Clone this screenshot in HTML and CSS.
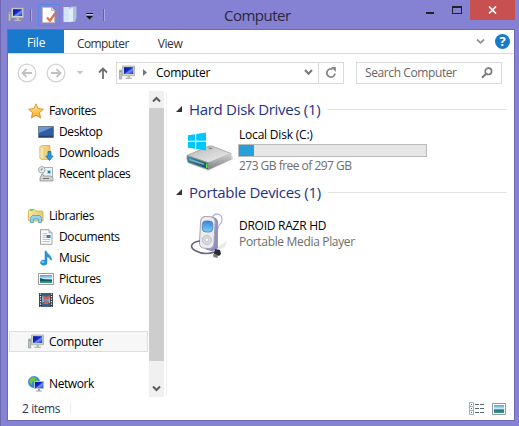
FILE: index.html
```html
<!DOCTYPE html>
<html lang="en">
<head>
<meta charset="utf-8">
<title>Computer</title>
<link rel="stylesheet" href="styles.css">
</head>
<body>
<svg class="defs" aria-hidden="true">
  <defs>
    <linearGradient id="screen" x1="0" y1="0" x2="1" y2="1"><stop offset="0" stop-color="#0a12a8"/><stop offset=".45" stop-color="#1226cc"/><stop offset=".6" stop-color="#6f96f4"/><stop offset="1" stop-color="#1730c0"/></linearGradient>
    <linearGradient id="folder" x1="0" y1="0" x2="1" y2="0"><stop offset="0" stop-color="#f8e7a2"/><stop offset="1" stop-color="#e8c768"/></linearGradient>
    <linearGradient id="metal" x1="0" y1="0" x2="0" y2="1"><stop offset="0" stop-color="#d4d5d5"/><stop offset="1" stop-color="#7c7e80"/></linearGradient>
    <linearGradient id="lid" x1="0" y1="0" x2="1" y2="1"><stop offset="0" stop-color="#b5b6b7"/><stop offset="1" stop-color="#f1f1f1"/></linearGradient>
    <linearGradient id="blueface" x1="0" y1="0" x2="1" y2="1"><stop offset="0" stop-color="#4a93ad"/><stop offset="1" stop-color="#1d4252"/></linearGradient>
    <linearGradient id="sky" x1="0" y1="0" x2="0" y2="1"><stop offset="0" stop-color="#4c9fe0"/><stop offset=".5" stop-color="#d7f0fa"/><stop offset=".6" stop-color="#27706a"/><stop offset="1" stop-color="#3aa08a"/></linearGradient>
    <linearGradient id="star" x1="0" y1="0" x2="0" y2="1"><stop offset="0" stop-color="#fff3a0"/><stop offset="1" stop-color="#ffa71c"/></linearGradient>
    <linearGradient id="lcd" x1="0" y1="0" x2="0" y2="1"><stop offset="0" stop-color="#2e86dc"/><stop offset="1" stop-color="#7fd0fa"/></linearGradient>
    <symbol id="pc" viewBox="0 0 16 16">
      <path d="M.5 5h2.200v9H.5z" fill="#bfc4c2" stroke="#8b908e" stroke-width=".6"/><path d="M1 6.500h1.300" stroke="#41c13c"/>
      <path d="M3.500 1h12v9.800h-12z" fill="#d5d5d0" stroke="#a3a39e" stroke-width=".7"/><path d="M5 2.200h9.200v6.800H5z" fill="url(#screen)"/>
      <path d="M8.500 11h2.500v1.700h2v1.300H6.300v-1.300h2.200z" fill="#b8b8b4"/>
    </symbol>
  </defs>
</svg>
<div class="window">
  <header class="titlebar">
    <div class="quick">
      <svg class="i16" width="16" height="16"><use href="#pc"/></svg>
      <span class="bar bar-a"></span>
      <span class="quick-props"><svg width="16" height="18" viewBox="0 0 16 18"><path d="M1.500 1.500h9l3 3v12h-12z" fill="#fff" stroke="#bdbdc6"/><path d="M10.500 1.500v3h3" fill="#ddd" stroke="#bbb"/><path d="M6 11.500l3 3.200 5-7.200" fill="none" stroke="#e07043" stroke-width="2.300"/></svg></span>
      <svg class="quick-folder" width="15" height="17" viewBox="0 0 15 17"><path d="M.5 1h6v15h-6z" fill="#d5e5f1"/><path d="M6 2l2-1.500h5.500v11L12 16H6z" fill="#a9c6df"/><path d="M6 3l4-1.500V15l-4 1.200z" fill="#e3eff7"/></svg>
      <svg class="quick-more" width="8" height="7" viewBox="0 0 8 7"><path d="M0 .5h7" stroke="#111"/><path d="M0 1.500h7" stroke="#c7c3ed"/><path d="M0 3h7L3.500 6.500z" fill="#111"/></svg>
      <span class="bar bar-b"></span>
    </div>
    <h1 class="title">Computer</h1>
    <div class="controls">
      <span class="minimize"></span><span class="maximize"></span>
      <span class="close"><svg width="9" height="8" viewBox="0 0 9 8"><path d="M1 .5l7 7M8 .5l-7 7" stroke="#fff" stroke-width="1.700"/></svg></span>
    </div>
  </header>
  <main class="client">
    <nav class="ribbon">
      <span class="file">File</span><span class="tab tab-computer">Computer</span><span class="tab tab-view">View</span>
      <span class="ribbon-end">
        <svg width="9" height="7" viewBox="0 0 9 7"><path d="M1 1.500l3.500 3.300L8 1.500" fill="none" stroke="#919191" stroke-width="1.800"/></svg>
        <span class="help">?</span>
      </span>
    </nav>
    <div class="address-row">
      <svg class="back" width="20" height="20" viewBox="0 0 20 20"><circle cx="10" cy="10" r="8.800" fill="none" stroke="#d3d3d3" stroke-width="1.300"/><path d="M15 10H6M9.500 6L5.500 10l4 4" fill="none" stroke="#c1c1c1" stroke-width="1.800"/></svg>
      <svg class="forward" width="20" height="20" viewBox="0 0 20 20"><circle cx="10" cy="10" r="8.800" fill="none" stroke="#d3d3d3" stroke-width="1.300"/><path d="M5 10h9M10.500 6l4 4-4 4" fill="none" stroke="#c1c1c1" stroke-width="1.800"/></svg>
      <svg class="history" width="8" height="4" viewBox="0 0 8 4"><path d="M.5 0h7L4 3.500z" fill="#c8c8c8"/></svg>
      <svg class="up" width="10" height="12" viewBox="0 0 10 12"><path d="M5 12V2M1 5.500l4-4 4 4" fill="none" stroke="#6f6f6f" stroke-width="1.800"/></svg>
      <div class="address">
        <svg class="i16" width="16" height="16"><use href="#pc"/></svg>
        <svg class="crumb" width="4" height="7" viewBox="0 0 4 7"><path d="M0 0l4 3.500L0 7z" fill="#777"/></svg>
        <span class="path">Computer</span>
        <svg class="drop" width="9" height="7" viewBox="0 0 9 7"><path d="M1 1l3.500 3.800L8 1" fill="none" stroke="#777" stroke-width="2"/></svg>
        <span class="refresh"><svg width="12" height="12" viewBox="0 0 12 12"><path d="M7.500 2.200A4.100 4.100 0 1 0 10 6.500" fill="none" stroke="#858585" stroke-width="1.700"/><path d="M6 0h4.800v5z" fill="#858585"/></svg></span>
      </div>
      <div class="search"><span>Search Computer</span><svg width="12" height="12" viewBox="0 0 12 12"><circle cx="7.400" cy="4.300" r="3.200" fill="none" stroke="#777" stroke-width="1.600"/><path d="M5 6.800L1 10.800" stroke="#777" stroke-width="2"/></svg></div>
    </div>
    <div class="body">
      <aside class="tree">
        <div class="row"><svg width="16" height="16" viewBox="0 0 16 16"><path d="M8 .8l2.100 4.900 5.300.5-4 3.500 1.200 5.200L8 12.200l-4.600 2.700 1.200-5.200-4-3.500 5.300-.5z" fill="url(#star)" stroke="#e78b29" stroke-width="1"/></svg><span>Favorites</span></div>
        <div class="row sub"><svg width="16" height="16" viewBox="0 0 16 16"><path d="M.5 2.500h15v11H.5z" fill="#305f9f" stroke="#6e7f9a"/><path d="M1 3h14L1 9z" fill="#6d99d1"/><path d="M1 12.500h14" stroke="#243f75" stroke-width="1.500"/></svg><span>Desktop</span></div>
        <div class="row sub downloads"><svg width="16" height="16" viewBox="0 0 16 16"><path d="M2 1.500l2-1h8v14H4l-2-1z" fill="url(#folder)" stroke="#d4b354" stroke-width=".8"/><path d="M6 3v11.500L2 13V1.500z" fill="#f7e7a8" stroke="#d8bd6d" stroke-width=".6"/><path d="M10 6.500h3V11h2.200l-3.700 4.500L7.800 11H10z" fill="#2e97dc" stroke="#1567ab" stroke-width=".7"/></svg><span>Downloads</span></div>
        <div class="row sub"><svg width="16" height="16" viewBox="0 0 16 16"><path d="M5 1.500h9.500v10H5z" fill="#f0f4f6" stroke="#a8b0b4"/><path d="M9 4h4v4H9z" fill="#9bd3ee"/><path d="M10 5h2v2h-2z" fill="#2a75ab"/><path d="M4 8l-2 4v3h13v-3l-2-2H6z" fill="#cfd2d3" stroke="#8e9395" stroke-width=".8"/><path d="M5 12.500h6" stroke="#777"/><circle cx="3.800" cy="3.800" r="3.200" fill="#eef2f3" stroke="#9ba4a8"/><path d="M4 2v2H2.500" fill="none" stroke="#666" stroke-width=".8"/></svg><span>Recent places</span></div>
        <div class="row gap"><svg width="16" height="16" viewBox="0 0 16 16"><path d="M.5 3l1-1.500h5L8 3h6l1 1v9H.5z" fill="url(#folder)" stroke="#cba94c" stroke-width=".8"/><path d="M2 2.200h3" stroke="#56b83c"/><path d="M2.500 14.500V9.500l2-2h7l2 2v5h-3V11h-5v3.500z" fill="#94d3ed" stroke="#4b9fc5" stroke-width=".8"/></svg><span>Libraries</span></div>
        <div class="row sub"><svg width="16" height="16" viewBox="0 0 16 16"><path d="M2.500.7H11l3 3v11.600H2.500z" fill="#fafafa" stroke="#969696" stroke-width=".9"/><path d="M11 .7v3h3" fill="#ddd" stroke="#999" stroke-width=".7"/><path d="M4.500 4.500H9M4.500 6.500H8M4.500 8.500H8M4.500 10.500h7.500M4.500 12.500h7.500" stroke="#aaa" stroke-width=".7"/><path d="M8.500 6h4v3h-4z" fill="#337fc7"/></svg><span>Documents</span></div>
        <div class="row sub"><svg width="16" height="16" viewBox="0 0 16 16"><path d="M8 1c1 3 5.500 4 5.500 9h-1C12 8 10.500 7 9 6.500V13c0 3-6.500 3-6.500-.3C2.500 10.500 5 9.600 7 10.300V1z" fill="#2797dc" stroke="#1d78bc" stroke-width=".5"/><ellipse cx="5" cy="12" rx="1.700" ry="1" fill="#72c9f3"/></svg><span>Music</span></div>
        <div class="row sub"><svg width="16" height="16" viewBox="0 0 16 16"><path d="M.5 2.500h15v11H.5z" fill="#fff" stroke="#9a9a9a"/><path d="M2 4h12v8H2z" fill="url(#sky)"/><path d="M2 7l5 1.500 7 .5v1H2z" fill="#15576a"/></svg><span>Pictures</span></div>
        <div class="row sub"><svg width="16" height="16" viewBox="0 0 16 16"><path d="M1 1h14v14H1z" fill="#3b3b3b"/><path d="M4 1h8v14H4z" fill="#8bbbd9"/><path d="M4 1h8v4l-3 2-5-3zM4 11l3-2 5 2v4H4z" fill="#365f8a"/><path d="M5 3l3 2 4-2-1 4-2 2H6zM5 12l3-4 3 1-1 3z" fill="#cb6453"/><path d="M4.500 8h7" stroke="#5ba6dd" stroke-width="1.500"/><path d="M2.500 1.500v13M13.500 1.500v13" stroke="#eee" stroke-width="1.300" stroke-dasharray="1.300 1.200"/></svg><span>Videos</span></div>
        <div class="row gap selected"><svg width="16" height="16"><use href="#pc"/></svg><span>Computer</span></div>
        <div class="row gap"><svg width="16" height="16" viewBox="0 0 16 16"><circle cx="6" cy="6" r="5.600" fill="#2a8fd8" stroke="#2b6fae" stroke-width=".6"/><path d="M2 3l3-2 3 1-1 3-3 1v3L1 6zM8 3l2 1v2H8z" fill="#69c840"/><path d="M6.500 5.500h9v7h-9z" fill="url(#screen)" stroke="#b8bcc4"/><path d="M10 13h2v1.500h2v1H8v-1h2z" fill="#8da5bb"/></svg><span>Network</span></div>
      </aside>
      <div class="scrollbar">
        <svg width="9" height="7" viewBox="0 0 9 7"><path d="M1 5.500l3.500-3.500L8 5.500" fill="none" stroke="#5c5c5c" stroke-width="2"/></svg>
        <span class="thumb"></span>
        <svg width="9" height="7" viewBox="0 0 9 7"><path d="M1 1.500L4.500 5 8 1.500" fill="none" stroke="#5c5c5c" stroke-width="2"/></svg>
      </div>
      <section class="content">
        <div class="group"><svg width="6" height="6" viewBox="0 0 6 6"><path d="M6 0v6H0z" fill="#333"/></svg><h2 class="g-disk">Hard Disk Drives (1)</h2><span class="rule"></span></div>
        <div class="item disk">
          <svg width="50" height="44" viewBox="0 0 50 44"><path d="M6 36l18 7 25-12v-3L24 38z" fill="#dedede"/><path d="M3 27.500L25 18h3l19 7.500L25 35z" fill="url(#lid)" stroke="#9c9c9c" stroke-width=".8"/><path d="M24 34.500L47.500 25v6.500L25 41.500z" fill="url(#metal)"/><path d="M3 27.500l21.500 7.500v6.500L4 34.500q-1.500-3-1-7z" fill="url(#blueface)" stroke="#8b9499" stroke-width=".8"/><path d="M5 30.500l15 5v1.500L6 32.500z" fill="#6db9c9"/><path d="M22.800 35.500v4.500" stroke="#4df03c" stroke-width="1.700"/><path d="M24 19.500l5 .5-3 1.200z" fill="#777"/><g fill="#00c8ff"><path d="M4 7.200l7-1v6.600H4zM12.200 6L22 4.500v8.300h-9.800zM4 14h7v6.800l-7-1zM12.200 14H22v8.500L12.200 21z"/></g></svg>
          <div class="details"><span class="name n-disk">Local Disk (C:)</span><span class="meter"><span class="used"></span></span><span class="note t-free">273 GB free of 297 GB</span></div>
        </div>
        <div class="group"><svg width="6" height="6" viewBox="0 0 6 6"><path d="M6 0v6H0z" fill="#333"/></svg><h2 class="g-port">Portable Devices (1)</h2><span class="rule"></span></div>
        <div class="item player">
          <svg width="50" height="50" viewBox="0 0 50 50"><path d="M26 37l11-7-2 6-9 4z" fill="#e8e8e8"/><path d="M22 8C24 .5 32 2 32 9c0 5-5 4-4 9" fill="none" stroke="#b9b5dc" stroke-width="1.300"/><path d="M20 6l5 1q2.500 1 2.500 4v26l-5 3-7-2z" fill="#918dc8" stroke="#7774b0" stroke-width=".6"/><g transform="rotate(3 17 22)"><rect x="10" y="5.500" width="14.500" height="32" rx="5" fill="#ececf1" stroke="#a6a6b5"/><rect x="12" y="10" width="10.500" height="11" rx="3.500" fill="url(#lcd)" stroke="#5c7897" stroke-width=".8"/><circle cx="17.200" cy="29" r="4.600" fill="#dcdce4" stroke="#b3b3c0" stroke-width=".8"/><circle cx="17.200" cy="29" r="2" fill="#fff" stroke="#aaa" stroke-width=".6"/></g><path d="M10 30C1 31-1 36 5 39.500s12 4 20 1.500" fill="none" stroke="#686587" stroke-width="1.600"/><path d="M25 38l5 1 1 4-2 2-5-2z" fill="#292932"/><path d="M23 43l5 1-.5 3-4-1z" fill="#777"/></svg>
          <div class="details"><span class="name n-droid">DROID RAZR HD</span><span class="note t-player">Portable Media Player</span></div>
        </div>
      </section>
    </div>
    <footer class="status"><span class="count">2 items</span><span class="status-rule"></span>
      <span class="views"><svg width="16" height="14" viewBox="0 0 16 14"><path d="M.5.500h4v4h-4zM.5 4.500h4v4h-4zM.5 8.500h4v4h-4z" fill="#fff" stroke="#a3adb5"/><path d="M2 2h1v1H2z" fill="#3c8a4a"/><path d="M2 6h1v1H2z" fill="#c33"/><path d="M2 10h1v1H2z" fill="#2266bb"/><path d="M6 2.500h4M11 2.500h4M6 6.500h4M11 6.500h4M6 10.500h4M11 10.500h4" stroke="#596675"/></svg><svg width="14" height="12" viewBox="0 0 14 12"><path d="M.5.500h13v11H.5z" fill="#fff" stroke="#8e9ba7"/><path d="M2 2h10v8H2z" fill="url(#sky)"/></svg></span>
    </footer>
  </main>
</div>
</body>
</html>
```
FILE: styles.css
```css
* { box-sizing: border-box; }
body { margin: 0; font: 12px "Open Sans", "Noto Sans", sans-serif; color: #000; white-space: nowrap; }
svg { display: block; flex: none; }
.defs { position: absolute; width: 0; height: 0; }
.window { width: 519px; height: 426px; padding: 0 4px 5px 7px; background: #8581d3; box-shadow: inset 1px 0 #6e69ae; overflow: hidden; }
.titlebar { display: grid; grid-template-columns: 181px 1fr 89px; height: 29px; }
.quick { display: flex; align-items: center; height: 29px; padding-left: 1px; }
.bar { width: 2px; height: 12px; border-left: 1px solid #6864a4; border-right: 1px solid #aba7e5; }
.bar-a { margin-left: 6px; }
.bar-b { margin-left: 9px; }
.quick-props { display: grid; place-items: center; width: 22px; height: 22px; margin: 1px 0 0 6px; border: 1px solid #558be8; }
.quick-folder { margin-left: 3px; }
.quick-more { margin: 3px 0 0 8px; }
.title { margin: 0 0 0 36px; font-size: 15px; line-height: 30px; font-weight: 400; color: #29283c; letter-spacing: -.5px; }
.controls { display: flex; align-items: flex-start; }
.minimize { width: 8px; height: 2px; margin-top: 12px; background: #222; }
.maximize { width: 10px; height: 8px; margin: 6px 0 0 18px; border: 1px solid #222; border-top-width: 2px; }
.close { display: grid; place-items: center; width: 45px; height: 20px; margin-left: 8px; background: #c75050; }
.client { width: 508px; height: 392px; border: 1px solid #6d69b7; background: #fff; display: flex; flex-direction: column; }
.ribbon { display: flex; height: 24px; border-bottom: 1px solid #dadbdc; line-height: 27px; color: #333; }
.file { width: 56px; padding-left: 19px; background: #1979ca; color: #fff; line-height: 25px; letter-spacing: -.2px; }
.tab-computer { margin-left: 13px; letter-spacing: -.6px; }
.tab-view { margin-left: 29px; letter-spacing: -.4px; }
.ribbon-end { display: flex; margin-left: auto; padding-right: 4px; gap: 10px; align-items: center; }
.help { width: 15px; height: 15px; border-radius: 50%; background: #1979ca; color: #fff; text-align: center; font-size: 13px; font-weight: 700; line-height: 15px; }
.address-row { display: flex; align-items: center; height: 37px; padding: 0 0 0 9px; }
.forward { margin-left: 9px; }
.history { margin-left: 10px; }
.up { margin-left: 14px; }
.address { display: flex; align-items: center; width: 228px; height: 22px; margin-left: 8px; border: 1px solid #d9d9d9; }
.address .i16 { margin-left: 2px; }
.crumb { margin-left: 8px; }
.path { margin-left: 9px; letter-spacing: -.3px; }
.drop { margin-left: auto; margin-right: 5px; }
.refresh { display: grid; place-items: center; width: 25px; height: 20px; border-left: 1px solid #d9d9d9; }
.search { display: flex; align-items: center; justify-content: space-between; width: 146px; height: 22px; margin-left: 12px; padding: 0 8px 0 8px; border: 1px solid #d9d9d9; color: #666; letter-spacing: -.4px; }
.body { display: grid; grid-template-columns: 141px 15px 1fr; height: 306px; }
.tree { padding-top: 9px; letter-spacing: -.4px; }
.row { display: flex; align-items: center; height: 21px; padding-left: 20px; gap: 5px; }
.sub { padding-left: 30px; }
.downloads { letter-spacing: -.25px; }
.gap { margin-top: 21px; }
.selected { margin-left: 1px; width: 139px; padding-left: 18px; letter-spacing: -.3px; background: #f7f7f7; border: 1px solid #dedede; }
.scrollbar { display: flex; flex-direction: column; align-items: center; justify-content: space-between; padding: 5px 0 5px; background: #f0f0f0; }
.thumb { width: 15px; height: 253px; margin: 5px 0 auto; background: #cdcdcd; }
.content { margin-left: 2px; padding-left: 9px; border-left: 1px solid #f3f3f3; }
.group { display: flex; align-items: center; height: 20px; margin-top: 9px; }
.group:first-child { margin-top: 8px; }
.group h2 { margin: 0 7px 0 7px; font-size: 15px; line-height: 20px; font-weight: 400; color: #1e3287; letter-spacing: -.3px; }
.rule { flex: 1; height: 1px; margin-right: 7px; background: #e2e2e2; }
.item { display: flex; height: 54px; }
.disk > svg { margin: 9px 0 0 8px; }
.player { height: 60px; }
.player > svg { margin: 9px 0 0 14px; }
.details { display: flex; flex-direction: column; line-height: 16px; }
.disk .details { margin-left: 4px; padding-top: 8px; }
.player .details { margin-left: -2px; padding-top: 16px; }
.name, .note { margin-left: 1px; }
.note { color: #6d6d6d; }
.meter { width: 189px; height: 13px; margin: 1px 0 1px; padding: 0; border: 1px solid #bcbcbc; background: #e6e6e6; }
.used { display: block; width: 15px; height: 11px; background: #26a0da; }
.n-disk { letter-spacing: -.2px; }
.n-droid { letter-spacing: -.25px; }
.t-free { letter-spacing: -.52px; }
.t-player { letter-spacing: -.33px; }
.status { display: flex; align-items: center; height: 23px; padding-left: 14px; color: #1e395b; }
.count { width: 48px; letter-spacing: -.4px; }
.status-rule { width: 1px; height: 11px; background: #ececec; }
.views { display: flex; align-items: center; gap: 7px; margin-left: auto; padding-right: 8px; }
```
